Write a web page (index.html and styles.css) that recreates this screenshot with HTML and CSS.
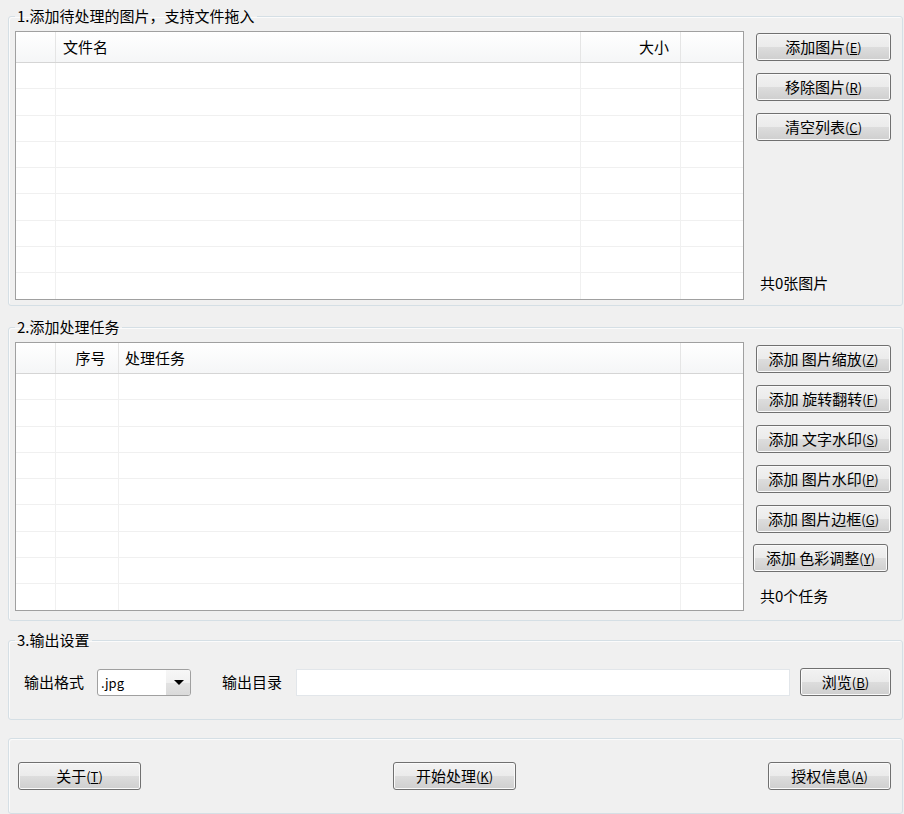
FILE: index.html
```html
<!DOCTYPE html>
<html>
<head>
    <title>图片批量处理</title>
    <link rel="stylesheet" href="styles.css">
</head>
<body>
    <fieldset class="group group-files">
        <legend>1.添加待处理的图片，支持文件拖入</legend>
        <div class="group-body">
            <div class="list">
                <div class="list-head cols-files">
                    <span></span><span>文件名</span><span class="right">大小</span><span></span>
                </div>
                <div class="list-body" id="file-rows"></div>
            </div>
            <div class="side">
                <button class="btn">添加图片<span class="key">(<u>E</u>)</span></button>
                <button class="btn">移除图片<span class="key">(<u>R</u>)</span></button>
                <button class="btn">清空列表<span class="key">(<u>C</u>)</span></button>
                <p class="count count-files">共0张图片</p>
            </div>
        </div>
    </fieldset>

    <fieldset class="group group-tasks">
        <legend>2.添加处理任务</legend>
        <div class="group-body">
            <div class="list">
                <div class="list-head cols-tasks">
                    <span></span><span class="center">序号</span><span>处理任务</span><span></span>
                </div>
                <div class="list-body" id="task-rows"></div>
            </div>
            <div class="side side-tasks">
                <button class="btn">添加 图片缩放<span class="key">(<u>Z</u>)</span></button>
                <button class="btn">添加 旋转翻转<span class="key">(<u>F</u>)</span></button>
                <button class="btn">添加 文字水印<span class="key">(<u>S</u>)</span></button>
                <button class="btn">添加 图片水印<span class="key">(<u>P</u>)</span></button>
                <button class="btn">添加 图片边框<span class="key">(<u>G</u>)</span></button>
                <button class="btn btn-shift">添加 色彩调整<span class="key">(<u>Y</u>)</span></button>
                <p class="count count-tasks">共0个任务</p>
            </div>
        </div>
    </fieldset>

    <fieldset class="group group-output">
        <legend>3.输出设置</legend>
        <div class="output-row">
            <label class="field-label">输出格式</label>
            <div class="combo">
                <span class="combo-text">.jpg</span>
                <span class="combo-btn"><i class="arrow"></i></span>
            </div>
            <label class="field-label dir-label">输出目录</label>
            <input type="text" class="dir-input">
            <button class="btn btn-browse">浏览<span class="key">(<u>B</u>)</span></button>
        </div>
    </fieldset>

    <div class="group group-actions">
        <button class="btn btn-action">关于<span class="key">(<u>T</u>)</span></button>
        <button class="btn btn-action">开始处理<span class="key">(<u>K</u>)</span></button>
        <button class="btn btn-action">授权信息<span class="key">(<u>A</u>)</span></button>
    </div>

    <script>
        function fillRows(id, cols, count) {
            const body = document.getElementById(id);
            for (let i = 0; i < count; i++) {
                body.innerHTML += `<div class="list-row ${cols}"><span></span><span></span><span></span><span></span></div>`;
            }
        }

        fillRows("file-rows", "cols-files", 9);
        fillRows("task-rows", "cols-tasks", 9);
    </script>
</body>
</html>
```

FILE: styles.css
```css
* { box-sizing: border-box; }
body {
    margin: 0; padding: 8px 1px 0 8px; background: #f0f0f0; color: #000;
    font: 15px/18px "Noto Sans CJK SC", "Noto Sans", sans-serif;
}

.group { margin: 0; border: 1px solid #d5dfe5; border-radius: 3px; min-width: 0; box-shadow: inset 1px 1px 0 #fbfbfb; }
legend { padding: 0 2px; line-height: 16px; }
.group-body { display: flex; gap: 12px; }

.group-files { padding: 7px 11px 5px 6px; }
.group-tasks { margin-top: 13px; padding: 7px 11px 9px 6px; }
.group-output { margin-top: 11px; padding: 20px 11px 23px 6px; }
.group-actions {
    margin-top: 18px; padding: 23px 11px 23px 9px;
    display: flex; justify-content: space-between;
}

/* list views */
.list { flex: 1; height: 269px; background: #fff; border: 1px solid #a0a0a0; overflow: hidden; }
.list-head, .list-row { display: grid; }
.cols-files { grid-template-columns: 40px 525px 100px 1fr; }
.cols-tasks { grid-template-columns: 40px 63px 562px 1fr; }
.list-head {
    height: 31px; border-bottom: 1px solid #d5d5d5;
    background: linear-gradient(#ffffff, #f5f6f7);
}
.list-head span { border-right: 1px solid #e5e5e5; padding: 0 6px; line-height: 30px; }
.list-head span:first-child + span { padding-left: 7px; }
.list-head span:last-child { border-right: none; }
.list-head .right { text-align: right; padding-right: 11px; }
.list-head .center { text-align: center; padding: 0; }
.list-row { height: 26.3px; border-bottom: 1px solid #f0f0f0; }
.list-row span { border-right: 1px solid #f0f0f0; }
.list-row span:last-child { border-right: none; }

/* right-hand button column */
.side { width: 135px; display: flex; flex-direction: column; gap: 12px; padding-top: 2px; }
.side-tasks { padding-top: 3px; }
.count { margin: auto 0 0 4px; }
.count-files { padding-bottom: 8px; }
.count-tasks { padding-bottom: 6px; }

.btn {
    height: 28px; padding: 0; border: 1px solid #707070; border-radius: 3px;
    background: linear-gradient(#f2f2f2 0%, #ebebeb 50%, #dddddd 50%, #cfcfcf 100%);
    box-shadow: inset 0 0 0 1px #fafafa;
    font: 15px/18px "Noto Sans CJK SC", "Noto Sans", sans-serif; color: #000;
    cursor: pointer; flex-shrink: 0;
}
.key { font-size: 13px; }
.key u { text-underline-offset: 1px; }
.btn-shift { margin: -1px 3px 0 -3px; }

/* output settings */
.output-row { display: flex; align-items: center; height: 28px; padding-left: 9px; }
.field-label { margin-right: 13px; }
.dir-label { margin-left: 31px; margin-right: 14px; }
.combo {
    width: 94px; height: 27px; display: flex; background: #fff;
    border: 1px solid #a0a0a0; border-radius: 3px; overflow: hidden;
}
.combo-text { flex: 1; padding-left: 3px; font-size: 13px; line-height: 25px; }
.combo-btn {
    width: 24px; display: flex; align-items: center; justify-content: center;
    background: linear-gradient(#f7f7f7 0%, #f0f0f0 50%, #e3e3e3 50%, #dadada 100%);
}
.arrow { width: 0; height: 0; border-left: 5px solid transparent; border-right: 5px solid transparent; border-top: 5px solid #000; margin-left: 2px; }
.dir-input { flex: 1; height: 27px; border: 1px solid #e2e6ea; background: #fff; margin-right: 10px; }
.btn-browse { width: 91px; }

.btn-action { width: 123px; }
```
